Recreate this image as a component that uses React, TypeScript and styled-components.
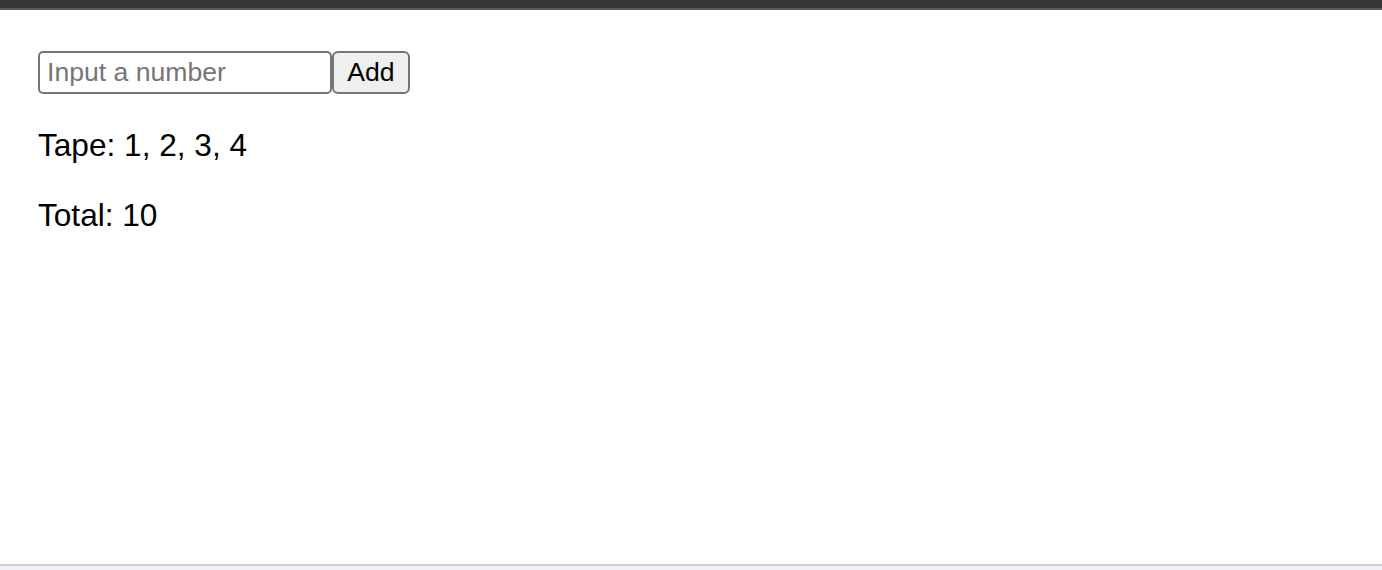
import React, { useState } from 'react';
import styled, { createGlobalStyle } from 'styled-components';

const GlobalStyle = createGlobalStyle`
    html, body {
        margin: 0;
        padding: 0;
        background: #ffffff;
    }
    body {
        font-family: "Liberation Sans", Arial, sans-serif;
        color: #000000;
    }
`;

const Page = styled.div`
    display: flex;
    flex-direction: column;
    height: 570px;
    overflow: hidden;
`;

const TopBar = styled.div`
    height: 8px;
    background-color: #37363b;
    border-bottom: 2px solid #5b5b5d;
    flex-shrink: 0;
`;

const Main = styled.main`
    flex: 1;
    padding: 41px 0 0 38px;
`;

const InputRow = styled.div`
    display: flex;
    align-items: stretch;
    height: 43px;
`;

const NumberInput = styled.input`
    box-sizing: border-box;
    width: 294px;
    height: 43px;
    margin: 0;
    padding: 0 7px;
    border: 2px solid #767676;
    border-radius: 5px;
    font-family: "Liberation Sans", Arial, sans-serif;
    font-size: 26.6px;
    color: #000;
    outline: none;

    &::placeholder {
        color: #757575;
    }
`;

const AddButton = styled.button`
    box-sizing: border-box;
    width: 78px;
    height: 43px;
    margin: 0;
    padding: 0;
    border: 2px solid #767676;
    border-radius: 6px;
    background-color: #efefef;
    font-family: "Liberation Sans", Arial, sans-serif;
    font-size: 26.6px;
    color: #000;
    cursor: pointer;
`;

const Line = styled.p`
    margin: 32px 0 0;
    font-size: 31.6px;
    line-height: 38px;
`;

const BottomStrip = styled.div`
    height: 4px;
    background-color: #eff1f5;
    border-top: 2px solid #cbced3;
    flex-shrink: 0;
`;

const App: React.FC = () => {
    const [value, setValue] = useState('');
    const [tape, setTape] = useState<number[]>([1, 2, 3, 4]);

    const handleAdd = () => {
        const n = Number(value);
        if (value.trim() === '' || Number.isNaN(n)) return;
        setTape([...tape, n]);
        setValue('');
    };

    const total = tape.reduce((sum, n) => sum + n, 0);

    return (
        <>
            <GlobalStyle />
            <Page>
                <TopBar />
                <Main>
                    <InputRow>
                        <NumberInput
                            value={value}
                            onChange={e => setValue(e.target.value)}
                            placeholder="Input a number"
                        />
                        <AddButton onClick={handleAdd}>Add</AddButton>
                    </InputRow>
                    <Line>Tape: {tape.join(', ')}</Line>
                    <Line>Total: {total}</Line>
                </Main>
                <BottomStrip />
            </Page>
        </>
    );
};

export default App;
